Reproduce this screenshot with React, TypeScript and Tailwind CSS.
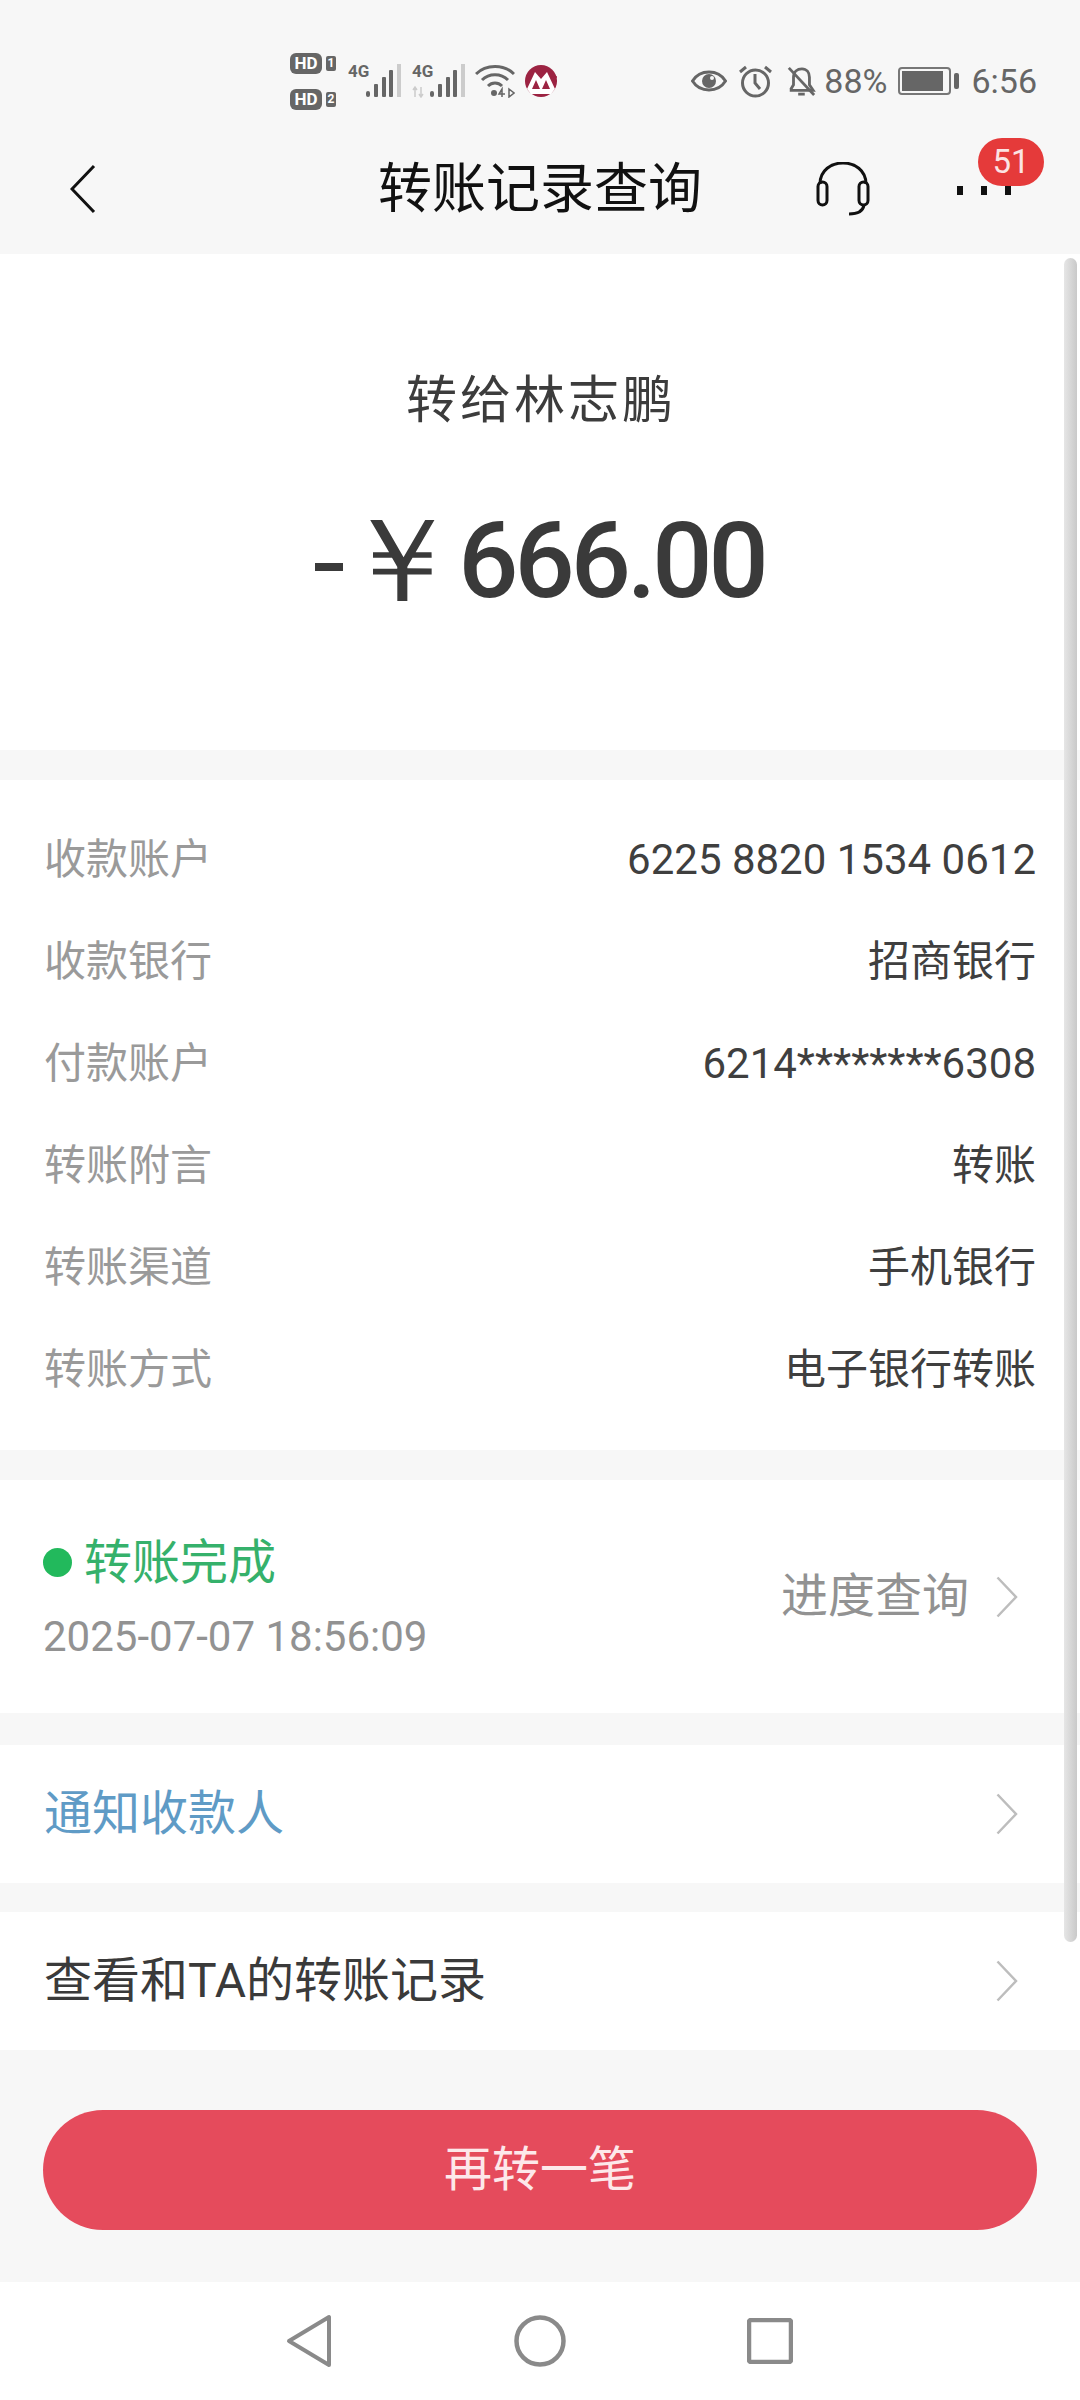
const cjk = "font-['Roboto','Noto_Sans_CJK_SC',sans-serif]";

const rows = [
  ["收款账户", "6225 8820 1534 0612"],
  ["收款银行", "招商银行"],
  ["付款账户", "6214********6308"],
  ["转账附言", "转账"],
  ["转账渠道", "手机银行"],
  ["转账方式", "电子银行转账"],
];

function Chevron() {
  return (
    <svg width="22" height="42" viewBox="0 0 22 42" fill="none" className="shrink-0">
      <path d="M1.5 1.5 L20 21 L1.5 40.5" stroke="#bdbdbd" strokeWidth="2.5" />
    </svg>
  );
}

function Signal({ lte }: { lte?: boolean }) {
  return (
    <svg width="54" height="38" viewBox="0 -4 54 38" className="shrink-0 mb-[4px]">
      <text x="0" y="13" fontSize="17" fontWeight="700" fill="#666" fontFamily="Roboto">4G</text>
      {lte && <path d="M3 23 V33 M1 26 L3 23 L5 26 M9 23 V33 M7 30 L9 33 L11 30" stroke="#ccc" strokeWidth="1.5" fill="none" />}
      <rect x="18" y="27" width="4" height="6" rx="2" fill="#666" />
      <rect x="26" y="20" width="4" height="13" rx="1" fill="#666" />
      <rect x="34" y="13" width="4" height="20" rx="1" fill="#666" />
      <rect x="41" y="6" width="4" height="27" rx="1" fill="#666" />
      <rect x="49" y="0" width="4" height="33" fill="#ccc" />
    </svg>
  );
}

function HdBadge({ n }: { n: string }) {
  return (
    <div className="flex items-center gap-[4px] h-[24px]">
      <span className="w-[32px] h-[21px] rounded-[6px] bg-[#666] text-white text-[17px] leading-[21px] font-bold text-center font-['Roboto',sans-serif]">HD</span>
      <span className="w-[10px] h-[15px] rounded-[2px] bg-[#666] text-white text-[12px] leading-[15px] font-bold text-center font-['Roboto',sans-serif]">{n}</span>
    </div>
  );
}

function StatusBar() {
  return (
    <div className="h-[130px] flex items-center pl-[290px] pr-[43px] pt-[32px] text-[#666] font-['Roboto',sans-serif]">
      <div className="flex flex-col gap-[12px]">
        <HdBadge n="1" />
        <HdBadge n="2" />
      </div>
      <div className="flex items-center gap-[10px] ml-[12px]">
        <Signal />
        <Signal lte />
      </div>
      {/* wifi */}
      <svg width="40" height="34" viewBox="0 0 40 34" fill="none" className="ml-[9px] shrink-0">
        <path d="M1 10 C11 0 29 0 39 10" stroke="#666" strokeWidth="3" />
        <path d="M7 16 C14 9 26 9 33 16" stroke="#666" strokeWidth="3" />
        <path d="M13 22 C17 18 23 18 27 22" stroke="#666" strokeWidth="3" />
        <circle cx="19" cy="29" r="3" fill="#666" />
        <path d="M27 33 V25 L24 30 H30 M34 25 L39 29 L34 33 Z" stroke="#666" strokeWidth="1.5" />
      </svg>
      {/* bank logo */}
      <svg width="32" height="32" viewBox="0 0 32 32" className="ml-[10px] shrink-0">
        <circle cx="16" cy="16" r="16" fill="#9c2342" />
        <path d="M2 24 L10 7 L16 14 L22 7 L30 24 L26 29 H6 Z" fill="#fff" />
        <path d="M7 24 L11 15 L15 24 Z M17 24 L21 15 L25 24 Z" fill="#9c2342" />
        <path d="M25 12 H32 M27 16 H32" stroke="#9c2342" strokeWidth="1.5" />
      </svg>
      <div className="flex-1" />
      {/* eye */}
      <svg width="36" height="26" viewBox="0 0 36 26" fill="none" className="shrink-0">
        <path d="M1.5 13 C9 1 27 1 34.5 13 C27 25 9 25 1.5 13 Z" stroke="#666" strokeWidth="3" />
        <circle cx="18" cy="13" r="7" fill="#666" />
        <circle cx="21" cy="10" r="2" fill="#f7f7f7" />
      </svg>
      {/* alarm */}
      <svg width="33" height="34" viewBox="0 0 33 34" fill="none" className="ml-[12px] shrink-0">
        <circle cx="16.5" cy="19" r="13" stroke="#666" strokeWidth="3" />
        <path d="M16 10 V19 L21 25" stroke="#666" strokeWidth="3" />
        <path d="M1 8 L7 3 M32 8 L26 3" stroke="#666" strokeWidth="3" />
      </svg>
      {/* muted bell */}
      <svg width="30" height="34" viewBox="0 0 32 34" fill="none" className="ml-[14px] shrink-0">
        <path d="M5 26 L8 21 V13 C8 7 12 4 17 4 C22 4 25 8 25 13 V21 L29 27 H4" stroke="#666" strokeWidth="3" />
        <path d="M13 31 H20" stroke="#666" strokeWidth="3" />
        <path d="M3 3 L30 32" stroke="#666" strokeWidth="3" />
      </svg>
      <span className="ml-[8px] text-[34px] leading-none">88%</span>
      {/* battery */}
      <div className="ml-[11px] flex items-center gap-[3px]">
        <div className="w-[53px] h-[28px] border-[2px] border-[#777] rounded-[4px] p-[2px]">
          <div className="w-[41px] h-full bg-[#666]" />
        </div>
        <div className="w-[5px] h-[16px] bg-[#666] rounded-[2px]" />
      </div>
      <span className="ml-[12px] text-[34px] leading-none">6:56</span>
    </div>
  );
}

function Header() {
  return (
    <header className="relative h-[124px] flex items-center justify-center">
      <svg width="26" height="50" viewBox="0 0 26 50" fill="none" className="absolute left-[70px] top-[34px]">
        <path d="M24 2 L2 25 L24 48" stroke="#111" strokeWidth="3" />
      </svg>
      <h1 className={`${cjk} text-[54px] leading-none text-[#111] pb-[5px]`}>转账记录查询</h1>
      <svg width="54" height="54" viewBox="0 0 54 54" fill="none" className="absolute left-[816px] top-[32px]">
        <path d="M4 22 C4 -6 50 -6 50 22" stroke="#111" strokeWidth="3" />
        <rect x="2" y="20" width="9" height="23" rx="4.5" stroke="#111" strokeWidth="3" />
        <rect x="43" y="20" width="9" height="23" rx="4.5" stroke="#111" strokeWidth="3" />
        <path d="M48 43 C47 49 41 52 33 52" stroke="#111" strokeWidth="3" />
      </svg>
      <div className="absolute left-[957px] top-[56px] flex gap-[18px]">
        <span className="w-[6px] h-[9px] bg-[#111]" />
        <span className="w-[6px] h-[9px] bg-[#111]" />
        <span className="w-[6px] h-[9px] bg-[#111]" />
      </div>
      <span className="absolute left-[978px] top-[8px] w-[66px] h-[48px] rounded-full bg-[#e53a3a] text-[#fbe3e3] text-[33px] leading-[48px] text-center font-['Roboto',sans-serif]">51</span>
    </header>
  );
}

export default function App() {
  return (
    <div className={`relative w-[1080px] h-[2400px] flex flex-col bg-[#f7f7f7] overflow-hidden ${cjk}`}>
      <StatusBar />
      <Header />

      <section className="h-[496px] bg-white flex flex-col items-center pt-[119px]">
        <div className="text-[51px] leading-[56px] text-[#3c3c3c] tracking-[3px] pl-[2px]">转给林志鹏</div>
        <div className="mt-[72px] flex items-center text-[#3a3a3a] font-medium font-['Roboto',sans-serif] text-[106px] leading-[120px]">
          <span className="w-[28px] h-[8px] bg-[#3a3a3a] mr-[-1px] mt-[12px]" />
          <span className="mr-[-2px] text-[118px] font-normal">￥</span>
          <span className="tracking-[-4px]">666.00</span>
        </div>
      </section>

      <section className="mt-[30px] h-[670px] bg-white px-[44px] pt-[28px] flex flex-col">
        {rows.map(([label, value]) => (
          <div key={label} className="h-[102px] flex items-center justify-between text-[42px]">
            <span className="text-[#9a9a9a]">{label}</span>
            <span className="text-[#3f3f3f]">{value}</span>
          </div>
        ))}
      </section>

      <section className="mt-[30px] h-[233px] bg-white pl-[43px] pr-[62px] flex items-center justify-between">
        <div className="flex flex-col">
          <div className="flex items-center gap-[12px]">
            <span className="w-[29px] h-[29px] rounded-full bg-[#22b95c]" />
            <span className="text-[48px] leading-[60px] text-[#35b16b]">转账完成</span>
          </div>
          <div className="mt-[20px] text-[42px] leading-[48px] text-[#929292]">2025-07-07 18:56:09</div>
        </div>
        <div className="flex items-center gap-[27px]">
          <span className="text-[47px] text-[#929292]">进度查询</span>
          <Chevron />
        </div>
      </section>

      <section className="mt-[32px] h-[138px] bg-white pl-[44px] pr-[62px] flex items-center justify-between">
        <span className="text-[48px] text-[#5f9bc6]">通知收款人</span>
        <Chevron />
      </section>

      <section className="mt-[29px] h-[138px] bg-white pl-[44px] pr-[62px] flex items-center justify-between">
        <span className="text-[48px] text-[#3a3a3a]">查看和TA的转账记录</span>
        <Chevron />
      </section>

      <div className="flex-1 flex items-center justify-center px-[43px] pt-[8px]">
        <button className="w-full h-[120px] rounded-full bg-[#e54b5c] text-[#fde8ea] text-[48px]">再转一笔</button>
      </div>

      <nav className="h-[118px] bg-white flex items-center justify-center gap-[181px] pr-[3px]">
        <svg width="48" height="54" viewBox="0 0 48 54" fill="none">
          <path d="M44 3 V51 L4 27 Z" stroke="#8a8a8a" strokeWidth="4" strokeLinejoin="round" />
        </svg>
        <svg width="52" height="52" viewBox="0 0 52 52" fill="none">
          <circle cx="26" cy="26" r="23.5" stroke="#8a8a8a" strokeWidth="4.5" />
        </svg>
        <svg width="46" height="46" viewBox="0 0 46 46" fill="none">
          <rect x="2" y="2" width="42" height="42" rx="2" stroke="#8a8a8a" strokeWidth="4.5" />
        </svg>
      </nav>

      {/* scrollbar overlay */}
      <div className="absolute left-[1064px] top-[258px] w-[13px] h-[1684px] rounded-full bg-linear-to-r from-[#e6e6e6] to-[#c9c9c9]" />
    </div>
  );
}
